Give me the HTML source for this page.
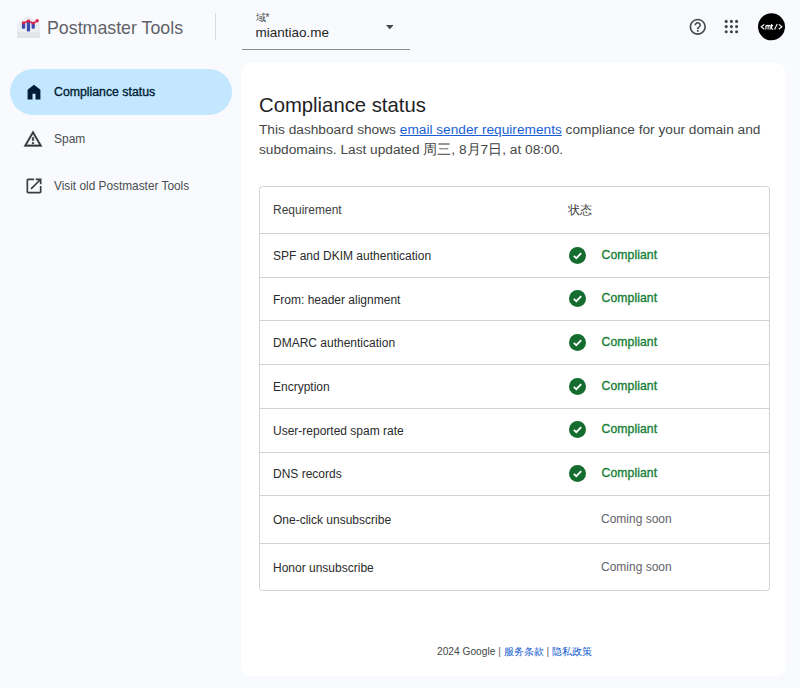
<!DOCTYPE html>
<html><head><meta charset="utf-8">
<style>
*{box-sizing:border-box;margin:0;padding:0}
html,body{width:800px;height:688px;overflow:hidden;background:#f8fafd;font-family:"Liberation Sans",sans-serif;color:#1f1f1f}
.abs{position:absolute}
.logo-text{left:47px;top:15.5px;font-size:17.8px;line-height:24px;color:#5f6368;white-space:nowrap}
.divider{left:215px;top:13px;width:1px;height:27px;background:#dadce0}
.dd-label{left:255.5px;top:12px;font-size:10px;line-height:12px;color:#444746}
.dd-value{left:255.5px;top:24px;font-size:13.5px;line-height:18px;color:#1f1f1f}
.dd-line{left:242px;top:48.8px;width:167.5px;height:1.6px;background:#8a8d91}
.nav-sel{left:10px;top:69px;width:222px;height:46px;border-radius:23px;background:#c2e7ff}
.nav-text{left:54px;font-size:12px;line-height:16px;color:#4a4d50;white-space:nowrap}
.card{left:241.3px;top:62.5px;width:544.5px;height:613.5px;background:#fff;border-radius:10px}
.title{left:259px;top:93px;font-size:20.3px;line-height:24px;color:#1f1f1f;white-space:nowrap}
.para{left:259px;top:119.7px;width:520px;font-size:13.7px;line-height:20px;color:#444746}
.para a{color:#1b5fd4;text-decoration:underline}
.table{left:259px;top:186px;width:511px;height:405px;border:1px solid #d2d3d5;border-radius:3.5px}
.hline{left:259px;width:511px;height:1px;background:#d2d3d5}
.cell{font-size:12px;line-height:16px;color:#2a2b2d;white-space:nowrap}
.chk{width:17px;height:17px;border-radius:50%;background:#146c2e}
.ok{font-size:12.2px;color:#188038;-webkit-text-stroke:0.35px #188038;letter-spacing:0.08px;white-space:nowrap;line-height:16px}
.soon{font-size:12px;color:#5f6368;white-space:nowrap;line-height:16px}
.footer{left:437px;top:645px;font-size:10.2px;line-height:14px;color:#444746;white-space:nowrap}
.footer a{color:#0b57d0;text-decoration:none}
</style></head><body>
<!-- header -->
<svg class="abs" style="left:0;top:0" width="50" height="45" viewBox="0 0 50 45">
  <path d="M17 23.5 L28.3 16 L40 23.5 L40 38 L17 38 Z" fill="#eceef1"/>
  <path d="M17 32 L40 32 L40 38 L17 38 Z" fill="#e4e5e8"/>
  <rect x="21.9" y="22" width="3.3" height="6.7" rx="1" fill="#3a4bb0"/>
  <rect x="26.8" y="20" width="3.3" height="11.5" rx="1" fill="#3a4bb0"/>
  <rect x="31.6" y="22.2" width="3.2" height="6.5" rx="1" fill="#3a4bb0"/>
  <path d="M23.5 23 L28.4 21 L33.2 23.2 L37.2 20.8" stroke="#d6254c" stroke-width="1.4" fill="none" stroke-linejoin="round"/>
  <rect x="21.9" y="21.6" width="3.3" height="2.8" rx="1.4" fill="#d6254c"/>
  <rect x="26.8" y="19.6" width="3.3" height="2.8" rx="1.4" fill="#d6254c"/>
  <rect x="31.6" y="21.8" width="3.2" height="2.8" rx="1.4" fill="#d6254c"/>
  <circle cx="37.2" cy="20.8" r="1.7" fill="#d6254c"/>
</svg>
<div class="abs logo-text">Postmaster Tools</div>
<div class="abs divider"></div>
<div class="abs dd-label">域*</div>
<div class="abs dd-value">miantiao.me</div>
<svg class="abs" style="left:385.6px;top:24.5px" width="7.6" height="4.4" viewBox="0 0 10 5" preserveAspectRatio="none"><path d="M0 0 L5 5 L10 0 Z" fill="#444746"/></svg>
<div class="abs dd-line"></div>

<svg class="abs" style="left:688px;top:17.3px" width="19.5" height="19.5" viewBox="0 0 24 24"><path fill="#444746" d="M11 18h2v-2h-2v2zm1-16C6.48 2 2 6.48 2 12s4.48 10 10 10 10-4.48 10-10S17.52 2 12 2zm0 18c-4.41 0-8-3.59-8-8s3.59-8 8-8 8 3.59 8 8-3.59 8-8 8zm0-14c-2.210 0-4 1.79-4 4h2c0-1.1.9-2 2-2s2 .9 2 2c0 2-3 1.75-3 5h2c0-2.25 3-2.5 3-5 0-2.21-1.79-4-4-4z"/></svg>
<svg class="abs" style="left:715px;top:10px" width="30" height="30" viewBox="715 10 30 30"><g fill="#444746"><circle cx="726.2" cy="21.4" r="1.55"/><circle cx="726.2" cy="26.6" r="1.55"/><circle cx="726.2" cy="31.8" r="1.55"/><circle cx="731.4" cy="21.4" r="1.55"/><circle cx="731.4" cy="26.6" r="1.55"/><circle cx="731.4" cy="31.8" r="1.55"/><circle cx="736.6" cy="21.4" r="1.55"/><circle cx="736.6" cy="26.6" r="1.55"/><circle cx="736.6" cy="31.8" r="1.55"/></g></svg>
<svg class="abs" style="left:750px;top:5px" width="45" height="45" viewBox="750 5 45 45">
  <circle cx="771.5" cy="26.8" r="13.5" fill="#000"/>
  <g stroke="#fff" fill="none" stroke-width="1.1">
    <path d="M764.3 24.4 L761.2 26.8 L764.3 29.2"/>
    <path d="M765.9 29.4 V25.4 M765.9 26.5 Q766.3 25.4 767.3 25.4 Q768.1 25.4 768.1 26.5 V29.4 M768.1 26.5 Q768.5 25.4 769.4 25.4 Q770.2 25.4 770.2 26.5 V29.4"/>
    <path d="M771.6 24 V28.2 Q771.6 29.1 772.4 29.1 H773.2 M770.6 25.6 H773.1"/>
    <path d="M777.2 23.9 L774.6 29.6"/>
    <path d="M778.8 24.4 L781.9 26.8 L778.8 29.2"/>
  </g>
</svg>

<!-- nav -->
<div class="abs nav-sel"></div>
<svg class="abs" style="left:23.7px;top:81.8px" width="20" height="20" viewBox="0 0 24 24"><path fill="#001d35" d="M4.3 21V9.2L12 3.3l7.7 5.9V21h-5.9v-6.8h-3.6V21z"/></svg>
<div class="abs nav-text" style="top:84px;color:#001d35;font-size:12.3px;-webkit-text-stroke:0.35px #001d35">Compliance status</div>
<svg class="abs" style="left:23px;top:129px" width="20" height="20" viewBox="0 0 24 24"><path fill="#333537" stroke="#333537" stroke-width="0.35" d="M12 5.99L19.53 19H4.47L12 5.99M12 2L1 21h22L12 2zm1 14h-2v2h2v-2zm0-6h-2v4h2v-4z"/></svg>
<div class="abs nav-text" style="top:131px">Spam</div>
<svg class="abs" style="left:23.5px;top:176.25px" width="20" height="20" viewBox="0 0 24 24"><path fill="#3a3c3e" d="M19 19H5V5h7V3H5c-1.11 0-2 .9-2 2v14c0 1.1.89 2 2 2h14c1.1 0 2-.9 2-2v-7h-2v7zM14 3v2h3.59l-9.83 9.83 1.41 1.41L19 6.41V10h2V3h-7z"/></svg>
<div class="abs nav-text" style="top:178px;font-size:11.85px">Visit old Postmaster Tools</div>

<!-- card -->
<div class="abs card"></div>
<div class="abs title">Compliance status</div>
<div class="abs para">This dashboard shows <a>email sender requirements</a> compliance for your domain and subdomains. Last updated 周三, 8月7日, at 08:00.</div>

<div class="abs table"></div>
<div class="abs hline" style="top:233px"></div>
<div class="abs hline" style="top:277px"></div>
<div class="abs hline" style="top:320px"></div>
<div class="abs hline" style="top:364px"></div>
<div class="abs hline" style="top:408px"></div>
<div class="abs hline" style="top:452px"></div>
<div class="abs hline" style="top:495px"></div>
<div class="abs hline" style="top:543px"></div>

<div class="abs cell" style="left:273px;top:202.3px;color:#3c3d3f">Requirement</div>
<div class="abs cell" style="left:568px;top:202px;color:#3c3d3f">状态</div>

<div class="abs cell" style="left:273px;top:248px">SPF and DKIM authentication</div>
<div class="abs cell" style="left:273px;top:292px">From: header alignment</div>
<div class="abs cell" style="left:273px;top:335px">DMARC authentication</div>
<div class="abs cell" style="left:273px;top:379px">Encryption</div>
<div class="abs cell" style="left:273px;top:423px">User-reported spam rate</div>
<div class="abs cell" style="left:273px;top:466px">DNS records</div>
<div class="abs cell" style="left:273px;top:512px">One-click unsubscribe</div>
<div class="abs cell" style="left:273px;top:560px">Honor unsubscribe</div>

<!-- status -->
<svg class="abs" style="left:569px;top:247px" width="17" height="17" viewBox="0 0 17 17"><circle cx="8.5" cy="8.5" r="8.5" fill="#146c2e"/><path d="M4.8 8.8 L7.3 11.2 L12.2 6.2" stroke="#fff" stroke-width="1.8" fill="none"/></svg>
<div class="abs ok" style="left:601.6px;top:247px">Compliant</div>
<svg class="abs" style="left:569px;top:290px" width="17" height="17" viewBox="0 0 17 17"><circle cx="8.5" cy="8.5" r="8.5" fill="#146c2e"/><path d="M4.8 8.8 L7.3 11.2 L12.2 6.2" stroke="#fff" stroke-width="1.8" fill="none"/></svg>
<div class="abs ok" style="left:601.6px;top:290px">Compliant</div>
<svg class="abs" style="left:569px;top:334px" width="17" height="17" viewBox="0 0 17 17"><circle cx="8.5" cy="8.5" r="8.5" fill="#146c2e"/><path d="M4.8 8.8 L7.3 11.2 L12.2 6.2" stroke="#fff" stroke-width="1.8" fill="none"/></svg>
<div class="abs ok" style="left:601.6px;top:334px">Compliant</div>
<svg class="abs" style="left:569px;top:378px" width="17" height="17" viewBox="0 0 17 17"><circle cx="8.5" cy="8.5" r="8.5" fill="#146c2e"/><path d="M4.8 8.8 L7.3 11.2 L12.2 6.2" stroke="#fff" stroke-width="1.8" fill="none"/></svg>
<div class="abs ok" style="left:601.6px;top:378px">Compliant</div>
<svg class="abs" style="left:569px;top:421px" width="17" height="17" viewBox="0 0 17 17"><circle cx="8.5" cy="8.5" r="8.5" fill="#146c2e"/><path d="M4.8 8.8 L7.3 11.2 L12.2 6.2" stroke="#fff" stroke-width="1.8" fill="none"/></svg>
<div class="abs ok" style="left:601.6px;top:421px">Compliant</div>
<svg class="abs" style="left:569px;top:465px" width="17" height="17" viewBox="0 0 17 17"><circle cx="8.5" cy="8.5" r="8.5" fill="#146c2e"/><path d="M4.8 8.8 L7.3 11.2 L12.2 6.2" stroke="#fff" stroke-width="1.8" fill="none"/></svg>
<div class="abs ok" style="left:601.6px;top:465px">Compliant</div>
<div class="abs soon" style="left:601px;top:511px">Coming soon</div>
<div class="abs soon" style="left:601px;top:559px">Coming soon</div>

<div class="abs footer">2024 Google <span style="color:#5f6368">|</span> <a>服务条款</a> <span style="color:#5f6368">|</span> <a>隐私政策</a></div>
</body></html>
